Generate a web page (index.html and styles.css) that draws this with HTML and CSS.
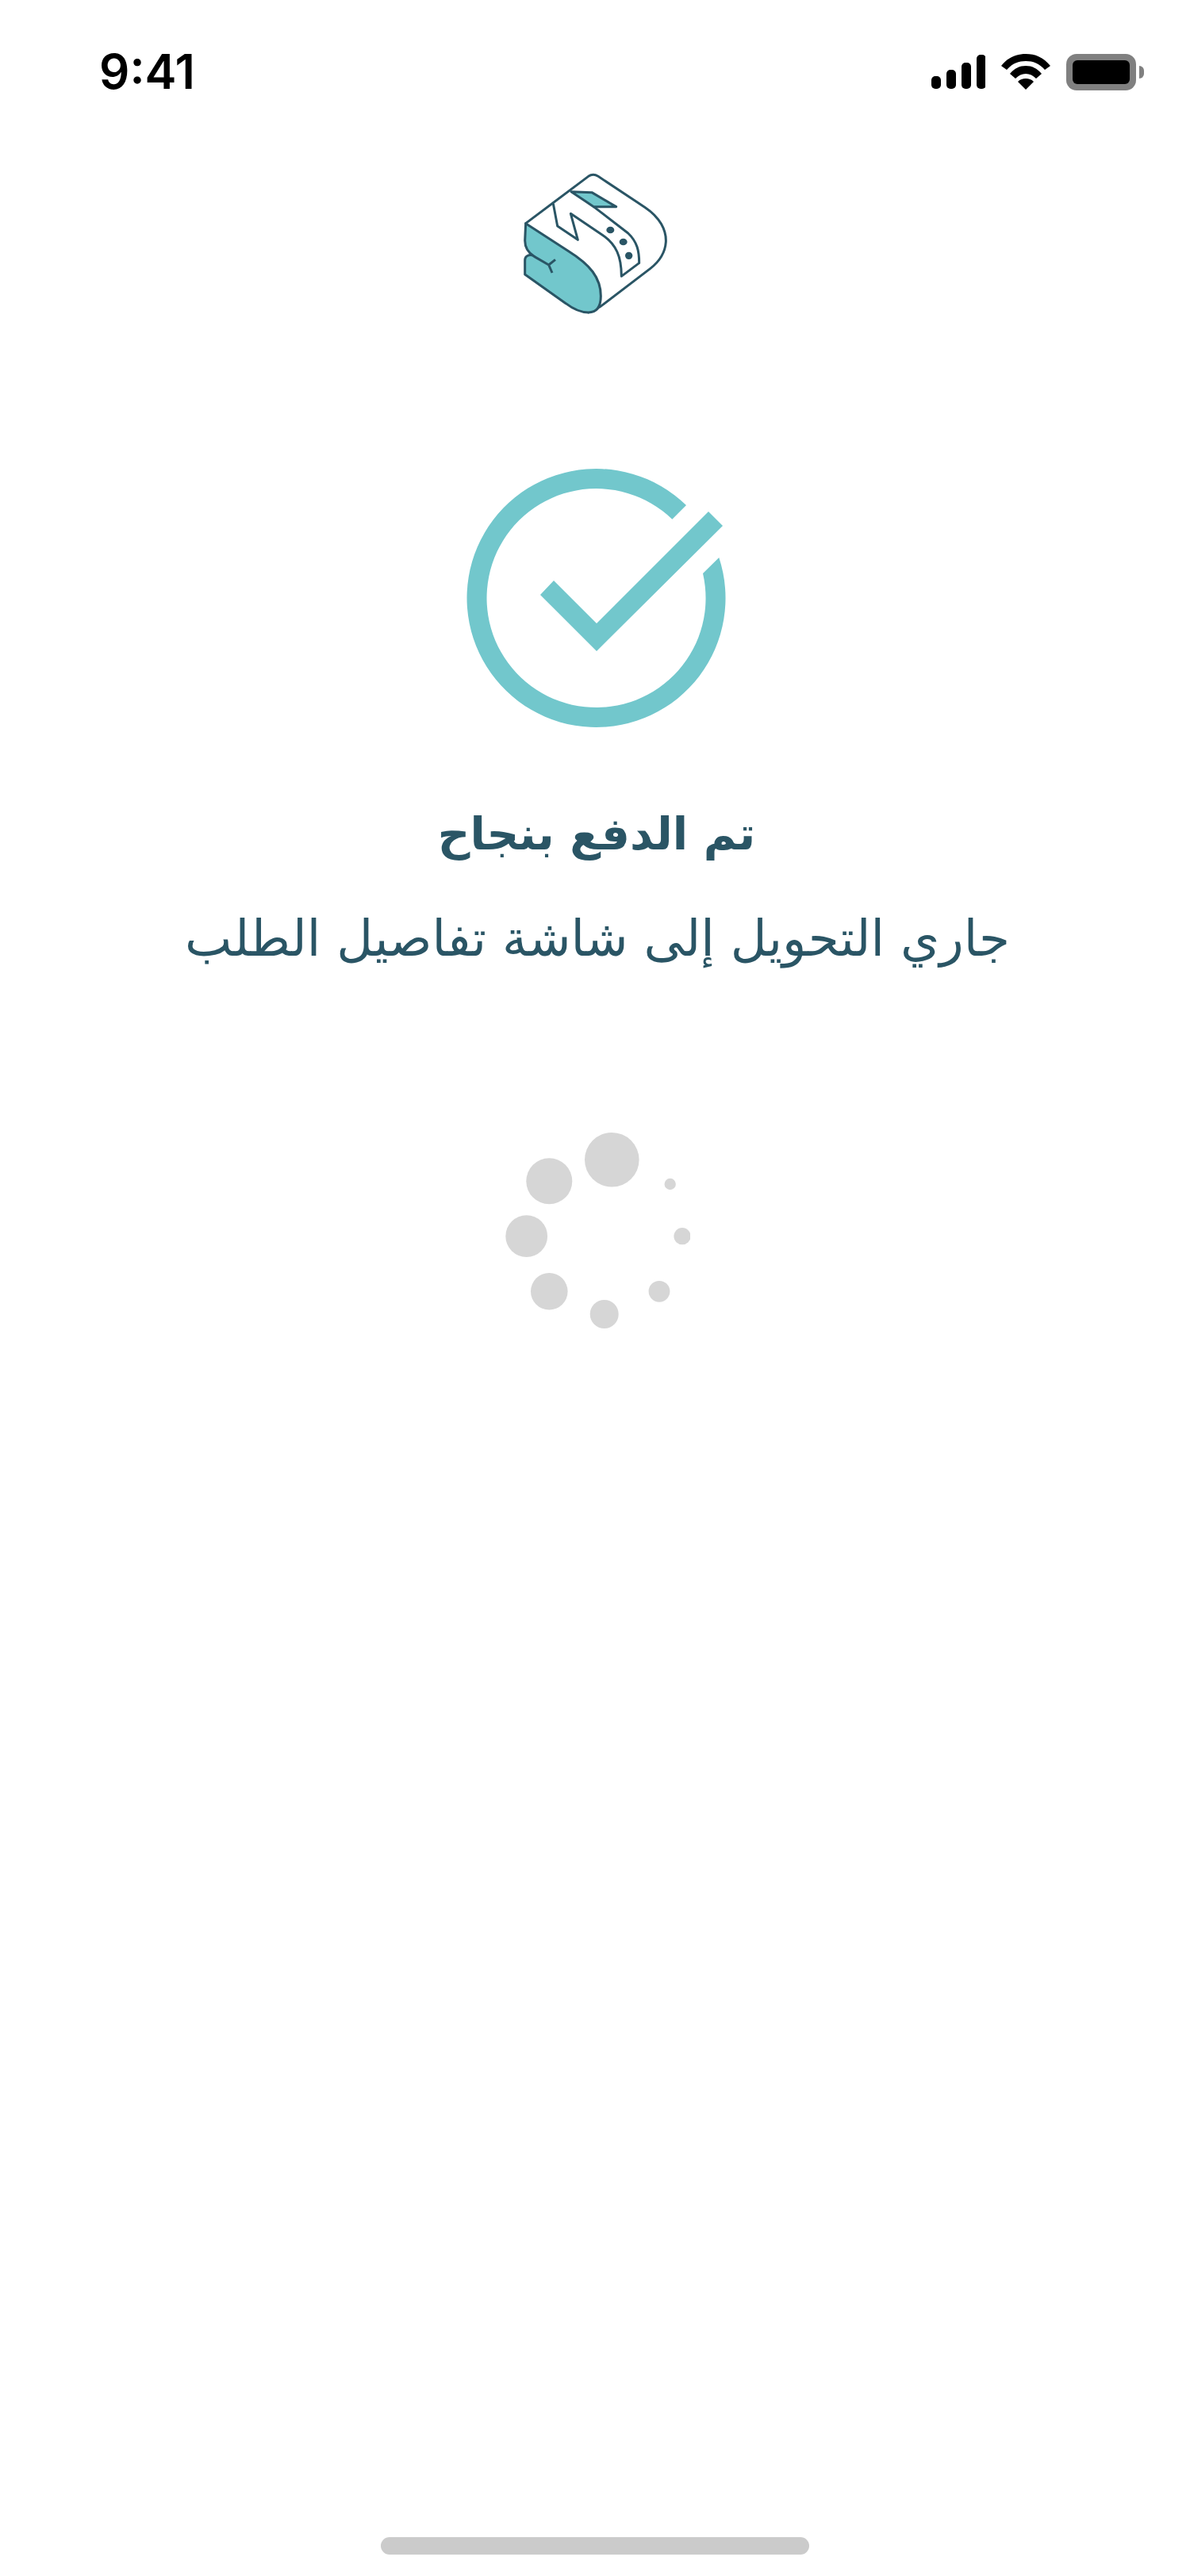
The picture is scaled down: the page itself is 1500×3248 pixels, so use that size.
FILE: index.html
```html
<!DOCTYPE html>
<html lang="ar">
<head>
<meta charset="utf-8">
<title>تم الدفع بنجاح</title>
<link rel="stylesheet" href="styles.css">
</head>
<body>
<main class="screen">
  <header class="status-bar">
    <span class="time">9:41</span>
    <div class="status-icons">
      <svg class="icon-signal" viewBox="0 0 68 44" aria-hidden="true">
        <rect x="0" y="27" width="12" height="16" rx="5"/>
        <rect x="19" y="19" width="12" height="24" rx="5"/>
        <rect x="38" y="10" width="12" height="33" rx="5"/>
        <rect x="57" y="0" width="12" height="43" rx="5"/>
      </svg>
      <svg class="icon-wifi" viewBox="0 0 62 46" aria-hidden="true">
        <path d="M31 0C43 0 53 4 62 15L55 20C48 12 40 9 31 9S14 12 7 20L0 15C9 4 19 0 31 0Z"/>
        <path d="M31 15C39 15 45 18 51 25L44 31C40 27 36 25 31 25S22 27 18 31L11 25C17 18 23 15 31 15Z"/>
        <path d="M31 31C35 31 38 32 41 35L31 45L21 35C24 32 27 31 31 31Z"/>
      </svg>
      <div class="battery">
        <div class="battery-body"><div class="battery-level"></div></div>
        <div class="battery-cap"></div>
      </div>
    </div>
  </header>

  <svg class="logo" viewBox="30 0 720 660" aria-hidden="true">
    <path class="logo-white" d="M128 275L365 97Q383 85 402 97L580 215C635 252 660 300 658 345C655 390 632 420 600 445L410 590L365 612L128 275Z"/>
    <path class="logo-teal" d="M128 275L290 380C370 430 412 480 412 550C412 592 395 612 365 612C330 612 305 597 280 578L125 468L125 415C125 395 145 390 160 400C135 385 125 365 125 340Z"/>
    <path class="logo-line" d="M160 400L215 432M240 412L215 432L228 462"/>
    <path class="logo-line" d="M232 200L248 285L325 337L298 238L420 320C470 355 490 400 490 475L557 425C557 380 550 345 515 312L385 212"/>
    <path class="logo-teal" d="M300 155L378 158L470 212L385 212Z"/>
    <ellipse class="logo-dot" cx="448" cy="300" rx="15" ry="13"/>
    <ellipse class="logo-dot" cx="497" cy="345" rx="15" ry="13"/>
    <ellipse class="logo-dot" cx="518" cy="397" rx="14" ry="14"/>
  </svg>

  <svg class="check" viewBox="570 590 360 330" aria-hidden="true">
    <path d="M865 637A163 163 0 1 0 906.3 702.9L886 723A138 138 0 1 1 847.3 654.7Z"/>
    <path d="M893 645L911 663L752 821L681 750L698 732L752 786Z"/>
  </svg>

  <h1 class="title">تم الدفع بنجاح</h1>
  <p class="subtitle">جاري التحويل إلى شاشة تفاصيل الطلب</p>

  <svg class="spinner" viewBox="630 1420 240 260" aria-hidden="true">
    <circle cx="771.3" cy="1462.3" r="34.3"/>
    <circle cx="692.3" cy="1489.3" r="29"/>
    <circle cx="663.7" cy="1558.7" r="26.4"/>
    <circle cx="692.3" cy="1628.3" r="23.3"/>
    <circle cx="761.7" cy="1657" r="18"/>
    <circle cx="831" cy="1628.3" r="13.4"/>
    <circle cx="860" cy="1558.7" r="10.6"/>
    <circle cx="844.7" cy="1493" r="7.2"/>
  </svg>

  <div class="home-indicator"></div>
</main>
</body>
</html>
```

FILE: styles.css
```css
* { box-sizing: border-box; }

html, body {
  margin: 0;
  background: #fff;
}

.screen {
  display: flex;
  flex-direction: column;
  align-items: center;
  width: 1500px;
  height: 3248px;
  overflow: hidden;
}

.status-bar {
  display: flex;
  justify-content: space-between;
  align-items: center;
  align-self: stretch;
  height: 130px;
  padding: 0 58px 0 125px;
}

.time {
  font-family: Inter, "Liberation Sans", sans-serif;
  font-size: 60px;
  font-weight: 600;
  line-height: 72px;
  margin-top: 50px;
  color: #000;
}

.status-icons {
  display: flex;
  align-items: center;
  gap: 20px;
  margin-top: 52px;
}

.icon-signal { width: 68px; height: 44px; fill: #000; }
.icon-wifi { width: 62px; height: 46px; fill: #000; }

.battery {
  display: flex;
  align-items: center;
  gap: 4px;
}

.battery-body {
  width: 88px;
  height: 46px;
  padding: 8px;
  border-radius: 13px;
  background: #808080;
}

.battery-level {
  height: 100%;
  border-radius: 6px;
  background: #000;
}

.battery-cap {
  width: 6px;
  height: 16px;
  border-radius: 0 8px 8px 0;
  background: #808080;
}

.logo {
  width: 240px;
  height: 220px;
  margin-top: 60px;
  flex: none;
}

.logo-white, .logo-teal, .logo-line {
  stroke: #2a5565;
  stroke-width: 9;
  stroke-linejoin: round;
}

.logo-white { fill: #fff; }
.logo-teal { fill: #72c7cc; }
.logo-line { fill: none; }
.logo-dot { fill: #2a5565; }

.check {
  width: 360px;
  height: 330px;
  margin-top: 180px;
  flex: none;
  fill: #72c7cc;
}

.title {
  margin: 92px 0 0;
  padding-left: 4px;
  font-family: "DejaVu Sans", sans-serif;
  font-size: 56.5px;
  font-weight: 700;
  line-height: 80px;
  color: #2a5565;
  text-align: center;
}

.subtitle {
  margin: 52px 0 0;
  padding-left: 6px;
  font-family: "DejaVu Sans", sans-serif;
  font-size: 63px;
  font-weight: 400;
  line-height: 80px;
  color: #2a5565;
  text-align: center;
}

.spinner {
  width: 240px;
  height: 260px;
  margin-top: 196px;
  flex: none;
  fill: #d6d6d6;
}

.home-indicator {
  width: 540px;
  height: 22px;
  margin-top: auto;
  margin-bottom: 27px;
  border-radius: 11px;
  background: #cbcbcb;
}
```
